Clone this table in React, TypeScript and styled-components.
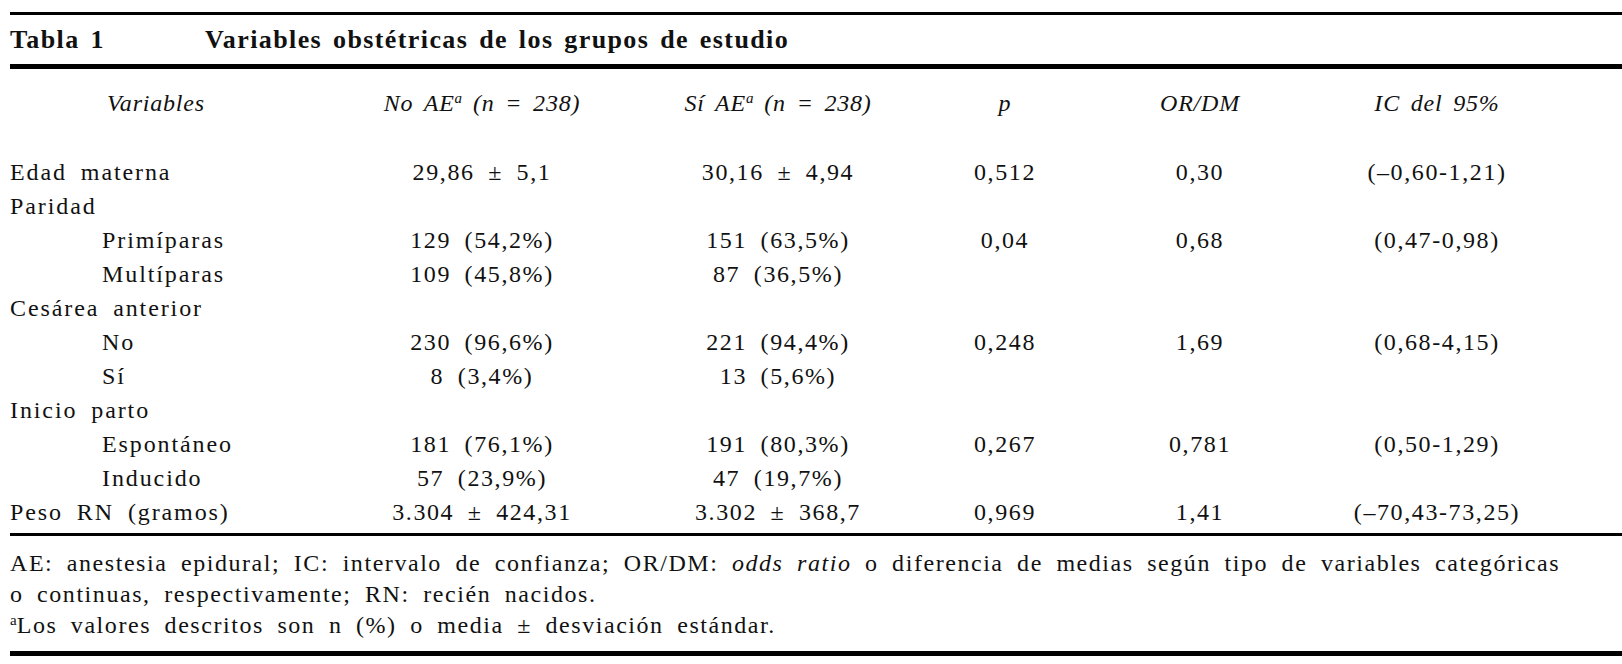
import React from "react";
import styled, { createGlobalStyle } from "styled-components";

const Global = createGlobalStyle`
  html, body { margin: 0; padding: 0; background: #fff; }
  body { font-family: "Liberation Serif", serif; color: #111; }
`;

const Page = styled.div`
  font-family: "Liberation Serif", serif;
  color: #111;
  padding: 12px 0 0 10px;
`;

const Rule = styled.div<{ $thick?: number; $mt?: number }>`
  height: ${(p) => p.$thick ?? 3}px;
  background: #000;
  margin-top: ${(p) => p.$mt ?? 0}px;
`;

const TitleRow = styled.div`
  display: grid;
  grid-template-columns: 195px 1fr;
  height: 49px;
  line-height: 49px;
  font-size: 26px;
  font-weight: bold;
  letter-spacing: 1.4px;
  word-spacing: 3px;
`;

const Grid = styled.div`
  display: grid;
  grid-template-columns: 292px 360px 232px 222px 168px 306px 1fr;
  font-size: 24px;
  letter-spacing: 1.6px;
  word-spacing: 6px;
`;

const HeaderGrid = styled(Grid)`
  font-style: italic;
  line-height: 34px;
  letter-spacing: 0.8px;
  word-spacing: 4px;
  margin: 17px 0 35px;
`;

const BodyGrid = styled(Grid)`
  line-height: 34px;
`;

const Cell = styled.div<{ $align?: "left" | "center"; $indent?: number }>`
  text-align: ${(p) => p.$align ?? "center"};
  padding-left: ${(p) => p.$indent ?? 0}px;
  white-space: nowrap;
`;

const Label = styled(Cell)`
  letter-spacing: 1.9px;
`;

const Sup = styled.sup`
  font-size: 15px;
  line-height: 0;
  vertical-align: 0.55em;
  letter-spacing: 0;
`;

const Notes = styled.div`
  font-size: 24px;
  line-height: 31px;
  letter-spacing: 1.55px;
  word-spacing: 6px;
  padding-top: 12px;
`;

type Row = { label: string; sub?: boolean; v: string[] };

const rows: Row[] = [
  { label: "Edad materna", v: ["29,86 ± 5,1", "30,16 ± 4,94", "0,512", "0,30", "(–0,60-1,21)"] },
  { label: "Paridad", v: ["", "", "", "", ""] },
  { label: "Primíparas", sub: true, v: ["129 (54,2%)", "151 (63,5%)", "0,04", "0,68", "(0,47-0,98)"] },
  { label: "Multíparas", sub: true, v: ["109 (45,8%)", "87 (36,5%)", "", "", ""] },
  { label: "Cesárea anterior", v: ["", "", "", "", ""] },
  { label: "No", sub: true, v: ["230 (96,6%)", "221 (94,4%)", "0,248", "1,69", "(0,68-4,15)"] },
  { label: "Sí", sub: true, v: ["8 (3,4%)", "13 (5,6%)", "", "", ""] },
  { label: "Inicio parto", v: ["", "", "", "", ""] },
  { label: "Espontáneo", sub: true, v: ["181 (76,1%)", "191 (80,3%)", "0,267", "0,781", "(0,50-1,29)"] },
  { label: "Inducido", sub: true, v: ["57 (23,9%)", "47 (19,7%)", "", "", ""] },
  { label: "Peso RN (gramos)", v: ["3.304 ± 424,31", "3.302 ± 368,7", "0,969", "1,41", "(–70,43-73,25)"] },
];

export default function App() {
  return (
    <Page>
      <Global />
      <Rule $thick={3} />
      <TitleRow>
        <span>Tabla 1</span>
        <span>Variables obstétricas de los grupos de estudio</span>
      </TitleRow>
      <Rule $thick={5} />
      <HeaderGrid>
        <Cell>Variables</Cell>
        <Cell>
          No AE<Sup>a</Sup> (n = 238)
        </Cell>
        <Cell>
          Sí AE<Sup>a</Sup> (n = 238)
        </Cell>
        <Cell>p</Cell>
        <Cell>OR/DM</Cell>
        <Cell>IC del 95%</Cell>
        <div />
      </HeaderGrid>
      <BodyGrid>
        {rows.map((r) => (
          <React.Fragment key={r.label}>
            <Label $align="left" $indent={r.sub ? 92 : 0}>
              {r.label}
            </Label>
            {r.v.map((val, i) => (
              <Cell key={i}>{val}</Cell>
            ))}
            <div />
          </React.Fragment>
        ))}
      </BodyGrid>
      <Rule $thick={3} $mt={4} />
      <Notes>
        AE: anestesia epidural; IC: intervalo de confianza; OR/DM: <i>odds ratio</i> o diferencia de
        medias según tipo de variables categóricas
        <br />o continuas, respectivamente; RN: recién nacidos.
        <br />
        <Sup>a</Sup>Los valores descritos son n (%) o media ± desviación estándar.
      </Notes>
      <Rule $thick={5} $mt={10} />
    </Page>
  );
}
